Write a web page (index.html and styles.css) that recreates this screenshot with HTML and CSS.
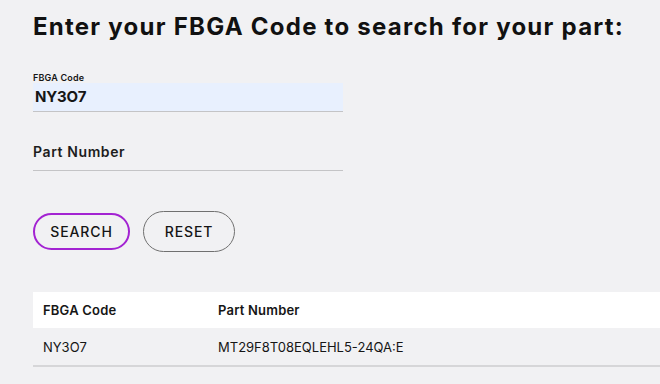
FILE: index.html
```html
<!DOCTYPE html>
<html>
<head>
<meta charset="utf-8">
<link rel="stylesheet" href="styles.css">
</head>
<body>
<main class="page">
  <h1 class="title">Enter your FBGA Code to search for your part:</h1>
  <div class="field field-filled">
    <label class="field-label">FBGA Code</label>
    <div class="field-input">NY3O7</div>
  </div>
  <div class="field field-empty">
    <div class="field-placeholder">Part Number</div>
  </div>
  <div class="actions">
    <button class="btn btn-search">SEARCH</button>
    <button class="btn btn-reset">RESET</button>
  </div>
  <table class="results">
    <thead>
      <tr><th class="col-code">FBGA Code</th><th>Part Number</th></tr>
    </thead>
    <tbody>
      <tr><td class="col-code">NY3O7</td><td>MT29F8T08EQLEHL5-24QA:E</td></tr>
    </tbody>
  </table>
</main>
</body>
</html>
```
FILE: styles.css
```css
html, body {
  margin: 0;
  padding: 0;
  background: #f1f1f3;
}
body {
  font-family: Inter, "Liberation Sans", Arial, sans-serif;
  color: #161616;
  width: 660px;
  height: 384px;
  overflow: hidden;
}
.page {
  padding-left: 33px;
}
.title {
  margin: 12px 0 0 0;
  font-size: 24px;
  line-height: 30px;
  font-weight: 700;
  letter-spacing: 1.25px;
  color: #111;
  white-space: nowrap;
}
.field {
  width: 310px;
}
.field-filled {
  margin-top: 31px;
}
.field-label {
  display: block;
  font-size: 9px;
  line-height: 10px;
  font-weight: 600;
  letter-spacing: 0.2px;
}
.field-input {
  background: #e8f0fe;
  height: 28px;
  line-height: 28px;
  padding-left: 2px;
  font-size: 15px;
  font-weight: 700;
  letter-spacing: -0.2px;
  border-bottom: 1px solid #c4c4c6;
}
.field-empty {
  margin-top: 30px;
  padding-bottom: 8px;
  border-bottom: 1px solid #c4c4c6;
}
.field-placeholder {
  font-size: 14px;
  line-height: 20px;
  font-weight: 600;
  letter-spacing: 0.6px;
  color: #1d1d1d;
}
.actions {
  margin-top: 40px;
  display: flex;
  align-items: center;
  gap: 13px;
}
.btn {
  font-family: Inter, "Liberation Sans", Arial, sans-serif;
  font-size: 14px;
  font-weight: 500;
  letter-spacing: 0.9px;
  color: #151515;
  background: transparent;
  border-radius: 22px;
  padding: 0;
  cursor: pointer;
}
.btn-search {
  width: 97px;
  height: 37px;
  border: 2px solid #a323d2;
}
.btn-reset {
  width: 92px;
  height: 41px;
  border: 1.5px solid #707070;
}
.results {
  margin-top: 40px;
  width: 627px;
  border-collapse: collapse;
  font-size: 13px;
}
.results th {
  background: #ffffff;
  height: 36px;
  padding: 0;
  text-align: left;
  font-weight: 600;
  letter-spacing: 0.2px;
}
.results td {
  height: 37px;
  padding: 0;
  border-bottom: 2px solid #d6d6d8;
}
.col-code {
  width: 175px;
  padding-left: 10px !important;
}
```
